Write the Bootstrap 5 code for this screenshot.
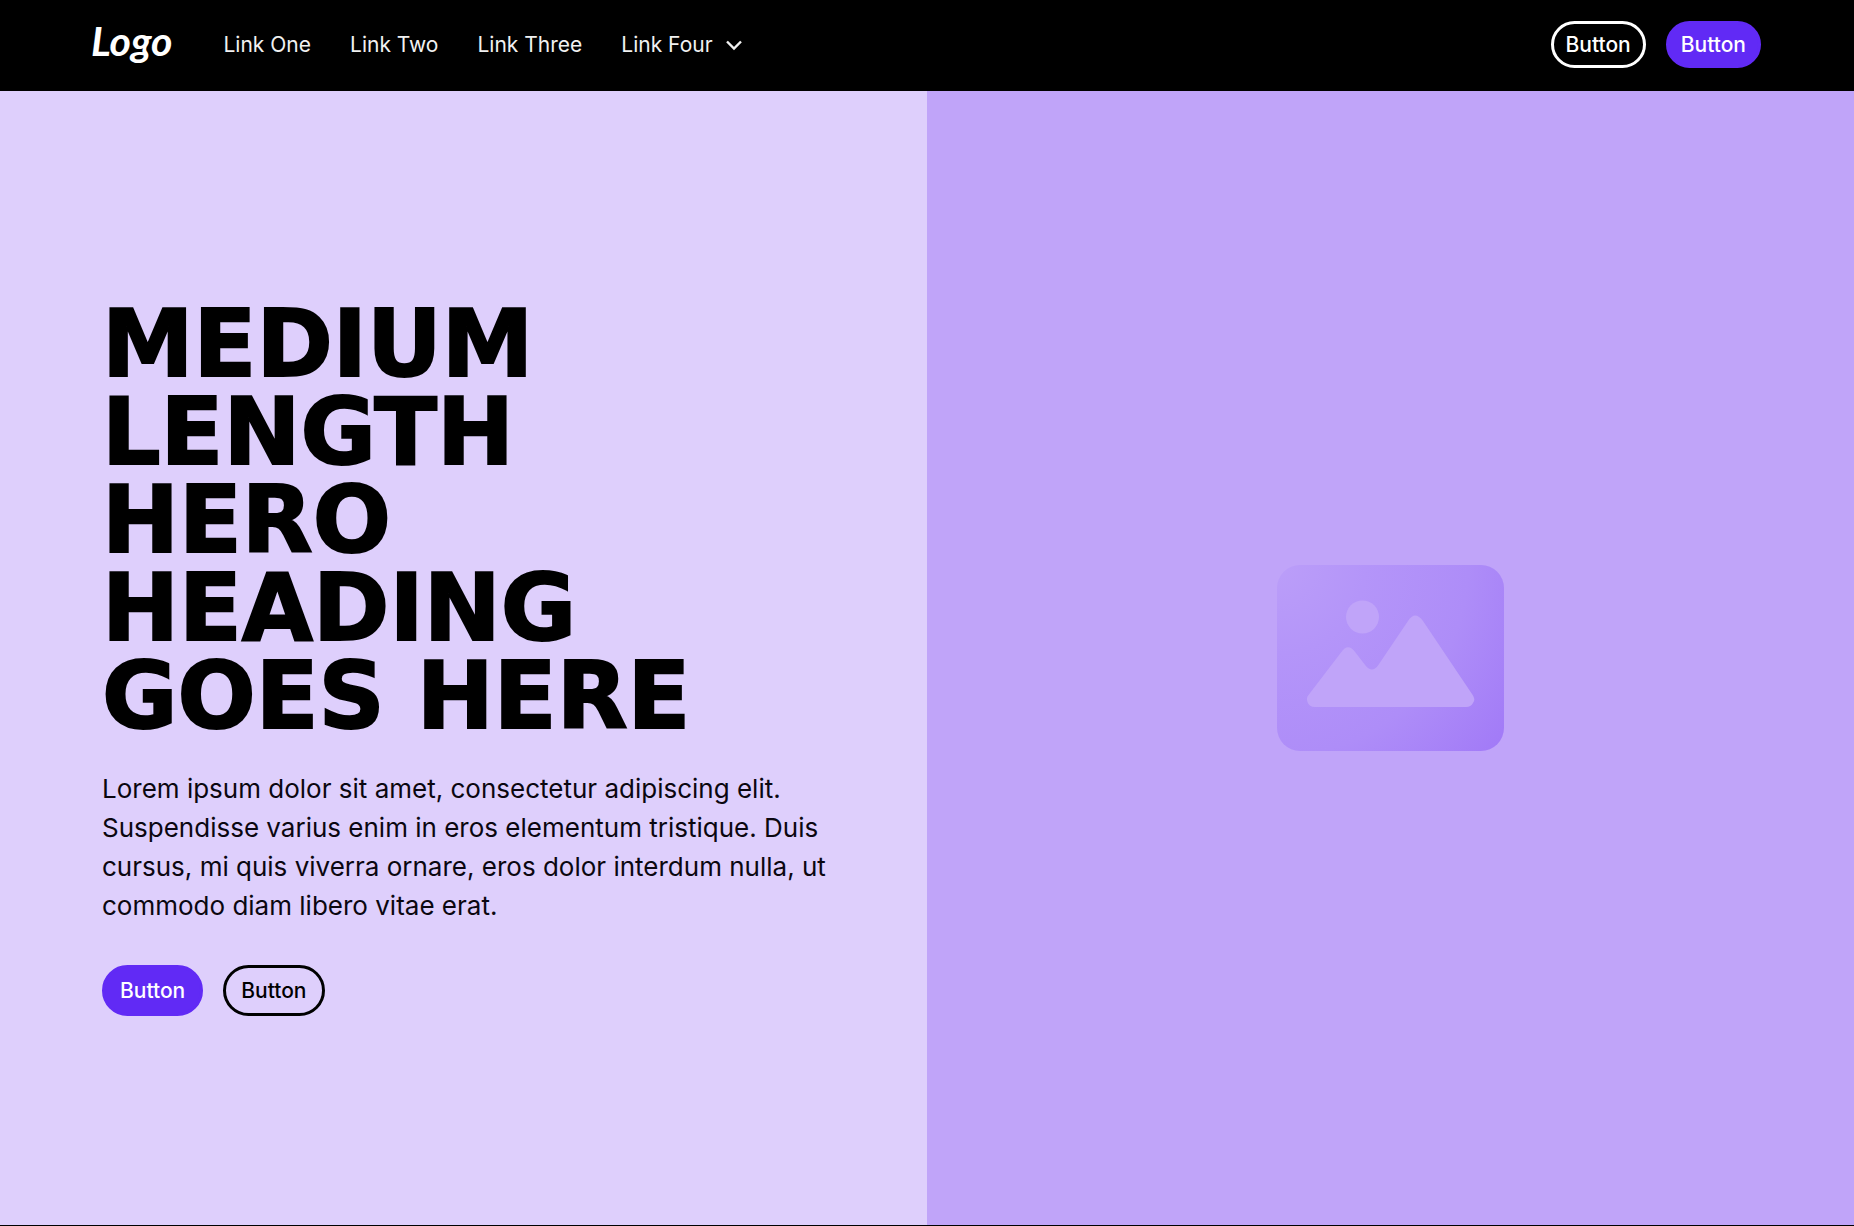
<!DOCTYPE html>
<html lang="en">
<head>
<meta charset="utf-8">
<meta name="viewport" content="width=device-width, initial-scale=1">
<title>Hero</title>
<link href="https://cdn.jsdelivr.net/npm/bootstrap@5.3.0/dist/css/bootstrap.min.css" rel="stylesheet">
<style>
body { font-family: Inter, "Liberation Sans", sans-serif; background: #000; color: #0b0710; border-bottom: 1px solid #000; }
.site-nav { --bs-navbar-padding-y: 0; min-height: 91px; padding: 0 93px 2px 91px; background: #000; }
.site-logo { --bs-navbar-brand-font-size: 41px; --bs-navbar-brand-margin-end: 0; --bs-navbar-brand-padding-y: 0; font-family: Lato, sans-serif; font-style: italic; font-weight: 700; line-height: 44px; padding-bottom: 8px; }
.site-links { gap: 39px; margin-left: 51px; }
.navbar .site-links .nav-link { padding: 0; font-size: 21px; line-height: 30px; color: #f1f1f1; }
.link-menu { gap: 9px; }
.pill { --bs-btn-font-size: 21px; --bs-btn-font-weight: 500; --bs-btn-line-height: 31px; --bs-btn-border-width: 3px; --bs-btn-border-radius: 26px; --bs-btn-padding-x: 12px; --bs-btn-padding-y: 5px; }
.pill-lg { --bs-btn-padding-x: 15px; --bs-btn-padding-y: 7px; }
.pill-fill { --bs-btn-color: #fff; --bs-btn-bg: #612af5; --bs-btn-border-color: #612af5; --bs-btn-hover-color: #fff; --bs-btn-hover-bg: #4d1ad6; --bs-btn-hover-border-color: #4d1ad6; }
.pill-light { --bs-btn-color: #fff; --bs-btn-border-color: #fff; --bs-btn-hover-color: #000; --bs-btn-hover-bg: #fff; }
.pill-dark { --bs-btn-color: #000; --bs-btn-border-color: #000; --bs-btn-hover-color: #fff; --bs-btn-hover-bg: #000; }
.btn-gap { gap: 20px; }
.hero-copy { background: #decffc; padding: 48px 96px 48px 102px; }
.hero-title { font-family: "DejaVu Sans", Inter, sans-serif; font-size: 92px; line-height: 88px; font-weight: 700; -webkit-text-stroke: 2px #000; color: #000; margin-bottom: 28px; }
.hero-text { font-size: 26px; line-height: 39px; margin-bottom: 40px; }
.hero-media { background: #c0a4f9; min-height: 400px; }
</style>
</head>
<body class="min-vh-100 d-flex flex-column">
<nav class="navbar navbar-expand-lg navbar-dark site-nav" aria-label="Main">
  <a class="navbar-brand site-logo" href="#">Logo</a>
  <ul class="navbar-nav site-links me-auto">
    <li class="nav-item"><a class="nav-link" href="#">Link One</a></li>
    <li class="nav-item"><a class="nav-link" href="#">Link Two</a></li>
    <li class="nav-item"><a class="nav-link" href="#">Link Three</a></li>
    <li class="nav-item"><a class="nav-link link-menu d-flex align-items-center" href="#">Link Four
      <svg width="24" height="24" viewBox="0 0 24 24" fill="none" stroke="#f1f1f1" stroke-width="2.4" aria-hidden="true"><path d="M5 8.500l7 7 7-7"/></svg></a></li>
  </ul>
  <div class="d-flex btn-gap">
    <button type="button" class="btn pill pill-light">Button</button>
    <button type="button" class="btn pill pill-fill">Button</button>
  </div>
</nav>
<main class="row g-0 flex-grow-1">
  <section class="col-lg-6 hero-copy d-flex flex-column justify-content-center">
    <h1 class="hero-title">MEDIUM<br>LENGTH<br>HERO<br>HEADING<br>GOES HERE</h1>
    <p class="hero-text">Lorem ipsum dolor sit amet, consectetur adipiscing elit. Suspendisse varius enim in eros elementum tristique. Duis cursus, mi quis viverra ornare, eros dolor interdum nulla, ut commodo diam libero vitae erat.</p>
    <div class="d-flex btn-gap">
      <button type="button" class="btn pill pill-lg pill-fill">Button</button>
      <button type="button" class="btn pill pill-lg pill-dark">Button</button>
    </div>
  </section>
  <section class="col-lg-6 hero-media d-flex align-items-center justify-content-center">
    <svg width="227" height="186" viewBox="0 0 227 186" role="img" aria-label="Image placeholder">
      <defs>
        <radialGradient id="tile" gradientUnits="userSpaceOnUse" cx="0" cy="0" r="294">
          <stop offset="0" stop-color="#bb9ef9"/><stop offset=".3" stop-color="#b495f9"/><stop offset=".65" stop-color="#ae8df8"/><stop offset="1" stop-color="#a179f7"/>
        </radialGradient>
      </defs>
      <rect width="227" height="186" rx="23" fill="url(#tile)"/>
      <circle cx="85.500" cy="52" r="16.500" fill="#c0a4f9"/>
      <path fill="#c0a4f9" d="M31.500 130 L64 87.500 Q71 77 78.500 87.500 L88.500 100.500 Q95 108.500 101 100.500 L131 56 Q138 45 146 56 L195 129 Q199 134 196 138 Q194 142 189 142 H38 Q32 142 30.500 137 Q29 133 31.500 130Z"/>
    </svg>
  </section>
</main>
<script src="https://cdn.jsdelivr.net/npm/bootstrap@5.3.0/dist/js/bootstrap.bundle.min.js"></script>
</body>
</html>
